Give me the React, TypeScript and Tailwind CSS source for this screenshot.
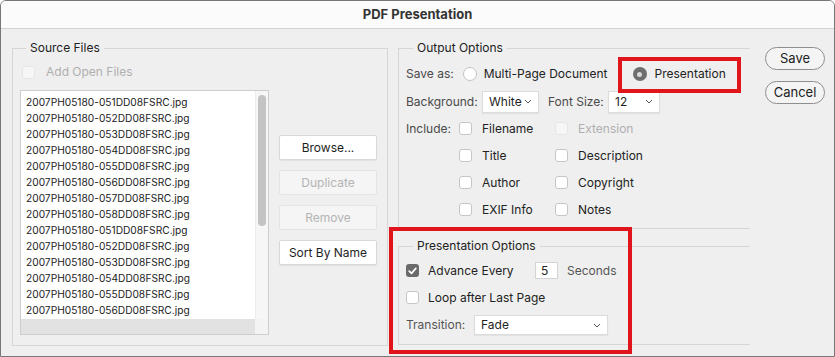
import React from 'react';

const fileNums = ['051', '052', '053', '054', '055', '056', '057', '058', '051', '052', '053', '054', '055', '056'];
const files = fileNums.map((n) => `2007PH05180-${n}DD08FSRC.jpg`);

const Chevron = () => (
  <svg width="8" height="5" viewBox="0 0 8 5" className="shrink-0">
    <path d="M1 1l3 3 3-3" fill="none" stroke="#555" strokeWidth="1" />
  </svg>
);

const Checkbox = ({ checked = false, disabled = false }: { checked?: boolean; disabled?: boolean }) => {
  if (checked) {
    return (
      <span className="w-[13px] h-[13px] rounded-[3px] bg-[#6a6a6a] flex items-center justify-center shrink-0">
        <svg width="9" height="8" viewBox="0 0 9 8">
          <path d="M1.2 4.2l2.3 2.2L7.8 1.4" fill="none" stroke="#fff" strokeWidth="1.7" strokeLinecap="round" strokeLinejoin="round" />
        </svg>
      </span>
    );
  }
  return (
    <span
      className={
        disabled
          ? 'block w-[13px] h-[13px] rounded-[3px] border border-[#e6e6e6] bg-[#f6f6f6] shrink-0'
          : 'block w-[13px] h-[13px] rounded-[3px] border border-[#c6c6c6] bg-white shrink-0'
      }
    />
  );
};

const Radio = ({ selected = false }: { selected?: boolean }) =>
  selected ? (
    <span className="w-[14px] h-[14px] rounded-full bg-[#6e6e6e] flex items-center justify-center shrink-0">
      <span className="block w-[5px] h-[5px] rounded-full bg-[#d8d8d8]" />
    </span>
  ) : (
    <span className="block w-[14px] h-[14px] rounded-full border border-[#c4c4c4] bg-white shrink-0" />
  );

const Button = ({ label, disabled = false }: { label: string; disabled?: boolean }) => (
  <div
    className={
      disabled
        ? 'h-[25px] flex items-center justify-center bg-[#f5f5f5] border border-[#e4e4e4] text-[#b4b4b4] rounded-[2px]'
        : 'h-[25px] flex items-center justify-center bg-white border border-[#d8d8d8] shadow-[0_1px_1px_rgba(0,0,0,0.06)] text-[#1e1e1e] rounded-[2px]'
    }
  >
    {label}
  </div>
);

const Pill = ({ label }: { label: string }) => (
  <div className="w-[60px] h-[23px] rounded-full border border-[#8e8e8e] bg-[#f4f4f4] flex items-center justify-center text-[13px] text-[#222]">
    {label}
  </div>
);

const Select = ({ value, className }: { value: string; className: string }) => (
  <div
    className={`${className} bg-white border border-[#dcdcdc] shadow-[0_1px_1px_rgba(0,0,0,0.05)] flex items-center justify-between pl-[6px] pr-[6px] text-[#1e1e1e]`}
  >
    <span>{value}</span>
    <Chevron />
  </div>
);

const Opt = ({ label, disabled = false }: { label: string; disabled?: boolean }) => (
  <div className="flex items-center">
    <Checkbox disabled={disabled} />
    <span className={disabled ? 'ml-[10px] text-[#b0b0b0]' : 'ml-[10px] text-[#222]'}>{label}</span>
  </div>
);

export default function App() {
  return (
    <div className="relative w-[835px] h-[357px] bg-[#efefef] border border-[#777] rounded-t-[6px] overflow-hidden font-['Inter','Liberation_Sans',sans-serif] text-[12px] text-[#222]">
      <div className="h-[28px] bg-[#fbfbfb] border-b border-[#d2d2d2] flex items-center justify-center font-bold text-[13px] text-[#333]">
        PDF Presentation
      </div>

      <div className="flex pt-[12px] pl-[11px]">
        {/* Source Files */}
        <fieldset className="w-[376px] border border-[#d6d6d6] px-[7px] pb-[10px]">
          <legend className="ml-[6px] px-[4px] leading-[14px] text-[12px] text-[#222]">Source Files</legend>
          <div className="h-[20px] mt-[7px] flex items-center pl-[2px]">
            <Checkbox disabled />
            <span className="ml-[11px] text-[#b0b0b0]">Add Open Files</span>
          </div>
          <div className="flex mt-[8px]">
            <div className="w-[249px] h-[245px] border border-[#cdcdcd] bg-white flex flex-col">
              <div className="flex flex-1 min-h-0">
                <div className="flex-1 pl-[5px] pt-[3px] overflow-hidden text-[10.2px] text-[#222]">
                  {files.map((f, i) => (
                    <div key={i} className="h-[16px] leading-[16px] whitespace-nowrap">
                      {f}
                    </div>
                  ))}
                </div>
                <div className="w-[13px] bg-[#f6f6f6] border-l border-[#ececec] pt-[4px] flex justify-center">
                  <div className="w-[8px] h-[131px] rounded-full bg-[#c3c3c3]" />
                </div>
              </div>
              <div className="h-[15px] flex">
                <div className="flex-1 bg-[#e2e2e2]" />
                <div className="w-[13px] bg-[#f3f3f3]" />
              </div>
            </div>
            <div className="w-[98px] ml-[10px] pt-[45px] flex flex-col gap-[10px]">
              <Button label="Browse..." />
              <Button label="Duplicate" disabled />
              <Button label="Remove" disabled />
              <Button label="Sort By Name" />
            </div>
          </div>
        </fieldset>

        {/* Options */}
        <div className="w-[352px] ml-[10px] flex flex-col">
          <fieldset className="border border-[#d6d6d6] border-r-0 px-[7px] pb-[5px]">
            <legend className="ml-[7px] px-[4px] leading-[14px] text-[12px] text-[#222]">Output Options</legend>
            <div className="h-[28px] mt-[5px] flex items-center">
              <span className="text-[#4a4a4a]">Save as:</span>
              <span className="ml-[9px] flex"><Radio /></span>
              <span className="ml-[7px]">Multi-Page Document</span>
              <span className="ml-[25px] flex"><Radio selected /></span>
              <span className="ml-[8px]">Presentation</span>
            </div>
            <div className="h-[27px] flex items-center">
              <span className="w-[76px] text-[#4a4a4a]">Background:</span>
              <Select value="White" className="w-[57px] h-[22px]" />
              <span className="ml-[9px] w-[60px] text-[#4a4a4a]">Font Size:</span>
              <Select value="12" className="w-[52px] h-[22px]" />
            </div>
            <div className="grid grid-cols-[53px_96px_1fr] auto-rows-[27px] items-center">
              <span className="text-[#4a4a4a]">Include:</span>
              <Opt label="Filename" />
              <Opt label="Extension" disabled />
              <span />
              <Opt label="Title" />
              <Opt label="Description" />
              <span />
              <Opt label="Author" />
              <Opt label="Copyright" />
              <span />
              <Opt label="EXIF Info" />
              <Opt label="Notes" />
            </div>
          </fieldset>

          <fieldset className="mt-[10px] border border-[#d6d6d6] border-r-0 px-[7px] pb-[5px]">
            <legend className="ml-[7px] px-[4px] leading-[14px] text-[12px] text-[#222]">Presentation Options</legend>
            <div className="h-[27px] mt-[4px] flex items-center">
              <Checkbox checked />
              <span className="ml-[9px] w-[107px]">Advance Every</span>
              <div className="w-[23px] h-[17px] bg-white border border-[#d4d4d4] flex items-center pl-[5px]">5</div>
              <span className="ml-[9px] text-[#555]">Seconds</span>
            </div>
            <div className="h-[27px] flex items-center">
              <Checkbox />
              <span className="ml-[9px]">Loop after Last Page</span>
            </div>
            <div className="h-[28px] flex items-center">
              <span className="w-[68px] text-[#555]">Transition:</span>
              <Select value="Fade" className="w-[134px] h-[20px]" />
            </div>
          </fieldset>
        </div>

        {/* Buttons */}
        <div className="ml-[15px] pt-[6px] flex flex-col gap-[11px]">
          <Pill label="Save" />
          <Pill label="Cancel" />
        </div>
      </div>

      {/* annotation highlights */}
      <div className="absolute left-[617px] top-[56px] w-[123px] h-[36px] border-[4px] border-[#e0141b]" />
      <div className="absolute left-[388px] top-[226px] w-[243px] h-[127px] border-[4px] border-[#e0141b]" />
    </div>
  );
}
